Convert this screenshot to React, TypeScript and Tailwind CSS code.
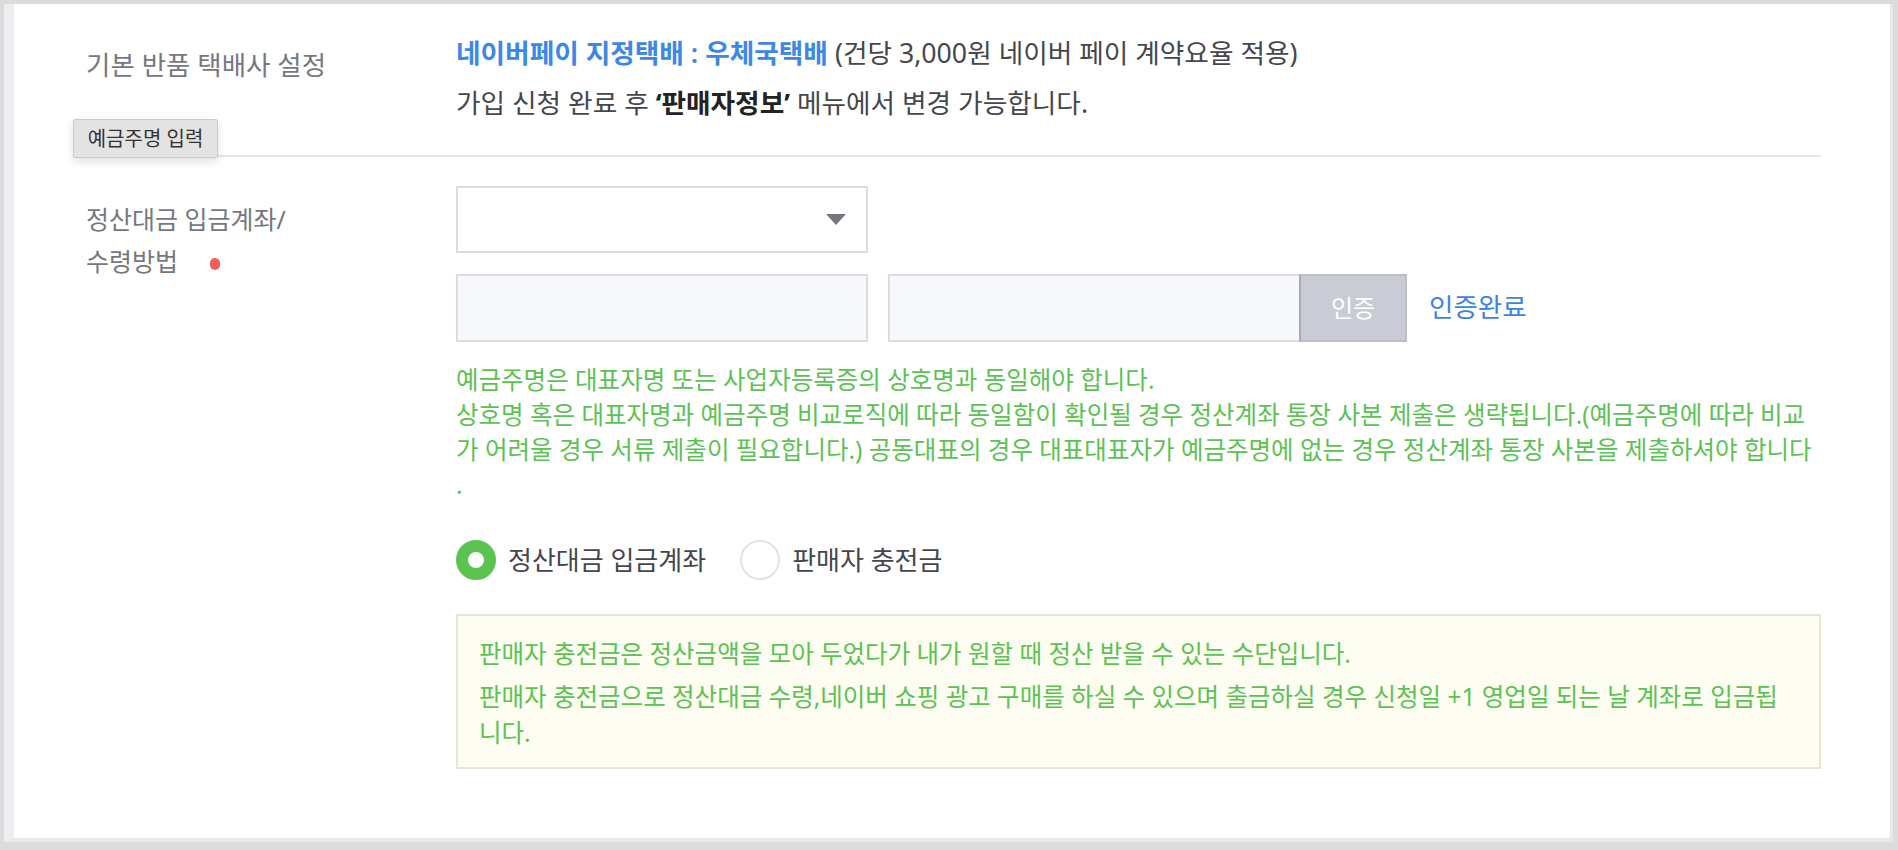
import { useState } from 'react'

const font = "font-['Noto_Sans','Noto_Sans_CJK_KR',sans-serif]"

export default function App() {
  const [method, setMethod] = useState<'account' | 'charge'>('account')

  return (
    <div className={`relative h-[850px] bg-[#dcdcdc] pt-1 pl-1 pr-[5px] pb-2 ${font}`}>
      <div className="h-full bg-white border-l-[10px] border-l-[#eceef2] border-r-[3px] border-b-[4px] border-r-[#e6e7eb] border-b-[#e6e7eb]">
        <div className="ml-[60px] mr-[69px]">
          {/* 기본 반품 택배사 */}
          <div className="flex pt-6 pb-[27px] border-b-2 border-[#e4e6ec]">
            <div className="w-[382px] shrink-0 pl-3 mt-3 text-[26.5px] leading-[50px] text-[#76787e]">
              기본 반품 택배사 설정
            </div>
            <div className="flex-1 text-[26.7px] leading-[50px] text-[#45474c]">
              <p>
                <span className="font-semibold text-[#3c87e8]">네이버페이 지정택배 : 우체국택배</span>{' '}
                (건당 3,000원 네이버 페이 계약요율 적용)
              </p>
              <p>
                가입 신청 완료 후 <b className="font-bold text-[#222]">‘판매자정보’</b> 메뉴에서 변경 가능합니다.
              </p>
            </div>
          </div>

          {/* 정산대금 입금계좌 */}
          <div className="flex pt-[29px] pb-[69px]">
            <div className="w-[382px] shrink-0 pl-3 mt-3 text-[25px] leading-[42px] text-[#76787e]">
              <p>정산대금 입금계좌/</p>
              <p>
                수령방법
                <span className="inline-block ml-[32px] w-[10px] h-[12px] rounded-full bg-[#f25c5c] align-middle" />
              </p>
            </div>
            <div className="flex-1">
              <div className="relative w-[412px] h-[67px] border-2 border-[#dcdde2] bg-white">
                <svg className="absolute right-[20px] top-[26px]" width="20" height="11" viewBox="0 0 20 11">
                  <path d="M0 0 H20 L10 11 Z" fill="#75767b" />
                </svg>
              </div>

              <div className="mt-[21px] flex items-center">
                <div className="w-[412px] h-[68px] border-2 border-[#dcdde2] bg-[#f7f8fb]" />
                <div className="ml-[20px] flex">
                  <div className="w-[411px] h-[68px] border-2 border-r-0 border-[#dcdde2] bg-[#f7f8fb]" />
                  <button className="w-[108px] h-[68px] border-2 border-[#bcbfc7] border-l-[#a9acb4] bg-[#c9ccd4] text-[24px] text-white">
                    인증
                  </button>
                </div>
                <span className="ml-[22px] text-[26.5px] text-[#3b84e3]">인증완료</span>
              </div>

              <div className="mt-[20px] text-[24.5px] leading-[35px] text-[#5cc253]">
                <p>예금주명은 대표자명 또는 사업자등록증의 상호명과 동일해야 합니다.</p>
                <p className="whitespace-nowrap">
                  상호명 혹은 대표자명과 예금주명 비교로직에 따라 동일함이 확인될 경우 정산계좌 통장 사본 제출은 생략됩니다.(예금주명에 따라 비교
                  <br />
                  가 어려울 경우 서류 제출이 필요합니다.) 공동대표의 경우 대표대표자가 예금주명에 없는 경우 정산계좌 통장 사본을 제출하셔야 합니다
                  <br />.
                </p>
              </div>

              <div className="mt-[38px] flex items-center text-[26px] text-[#45474c]">
                <label className="flex items-center cursor-pointer" onClick={() => setMethod('account')}>
                  <span
                    className={
                      method === 'account'
                        ? 'w-10 h-10 rounded-full border-[12px] border-[#5bc451] bg-white'
                        : 'w-10 h-10 rounded-full border-2 border-[#dfe2ea] bg-white'
                    }
                  />
                  <span className="ml-[12px]">정산대금 입금계좌</span>
                </label>
                <label className="ml-[34px] flex items-center cursor-pointer" onClick={() => setMethod('charge')}>
                  <span
                    className={
                      method === 'charge'
                        ? 'w-10 h-10 rounded-full border-[12px] border-[#5bc451] bg-white'
                        : 'w-10 h-10 rounded-full border-2 border-[#dfe2ea] bg-white'
                    }
                  />
                  <span className="ml-[12px]">판매자 충전금</span>
                </label>
              </div>

              <div className="mt-[34px] border-2 border-[#e6e5d8] bg-[#fdfdf1] px-[21px] pt-[20px] pb-[16px] text-[24.5px] leading-[36px] text-[#5cc253]">
                <p>판매자 충전금은 정산금액을 모아 두었다가 내가 원할 때 정산 받을 수 있는 수단입니다.</p>
                <p className="mt-[7px] whitespace-nowrap">
                  판매자 충전금으로 정산대금 수령,네이버 쇼핑 광고 구매를 하실 수 있으며 출금하실 경우 신청일 +1 영업일 되는 날 계좌로 입금됩
                  <br />
                  니다.
                </p>
              </div>
            </div>
          </div>
        </div>
      </div>

      {/* tooltip */}
      <div className="absolute left-[73px] top-[119px] w-[145px] h-[39px] flex items-center justify-center rounded-[2px] border border-[#cacaca] bg-[#e3e3e3] text-[20px] text-[#333] shadow-[0_4px_10px_rgba(0,0,0,0.12)]">
        예금주명 입력
      </div>
    </div>
  )
}
